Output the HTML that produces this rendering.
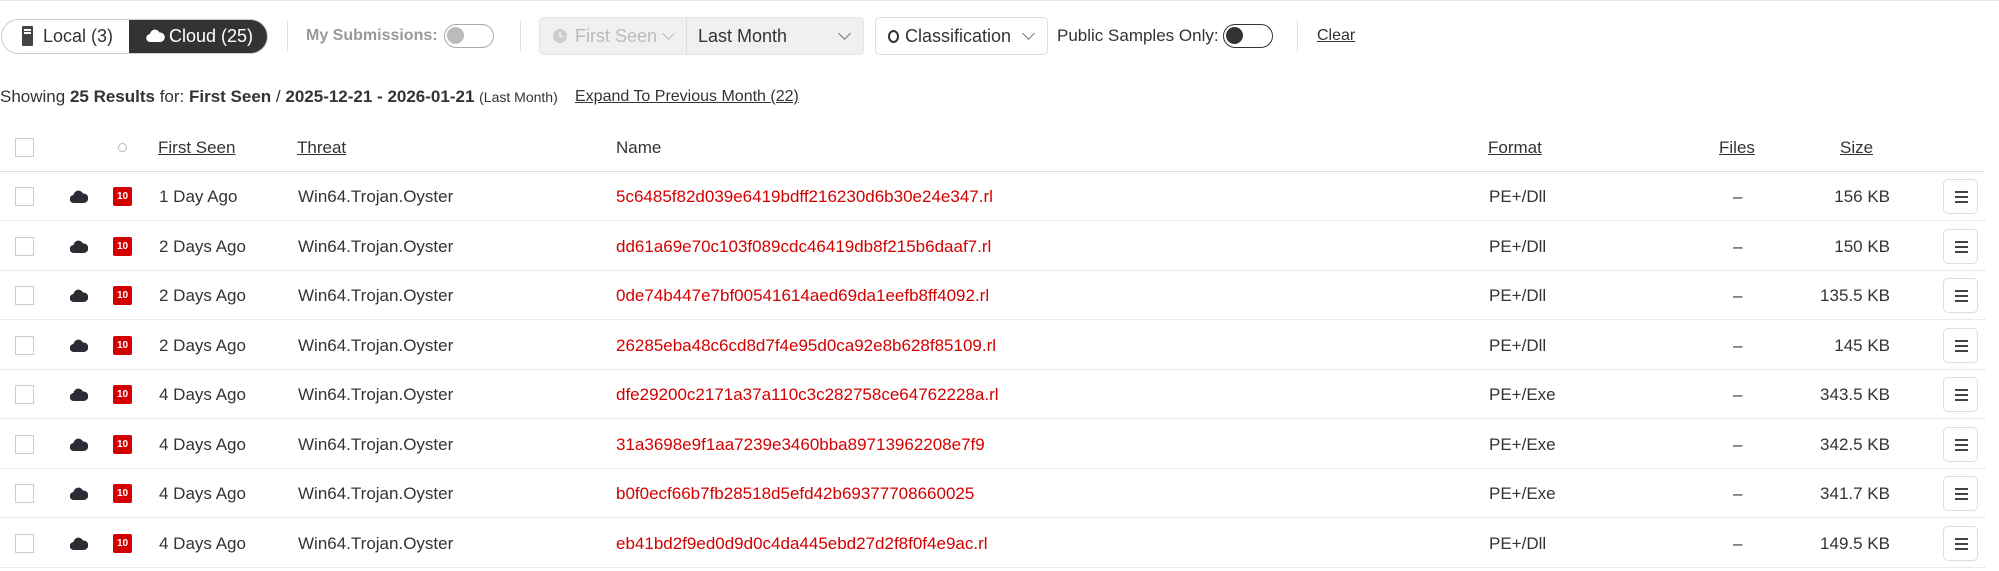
<!DOCTYPE html>
<html><head><meta charset="utf-8"><style>
*{box-sizing:border-box;margin:0;padding:0}
body{width:1999px;height:571px;background:#fff;position:relative;overflow:hidden;font-family:"Liberation Sans Narrow","Liberation Sans",Arial,sans-serif;color:#333;font-size:17px}
.a{position:absolute;white-space:nowrap}
.cb{position:absolute;width:19px;height:19px;border:1.5px solid #ccc;background:#fff}
.row{position:absolute;left:0;width:1985px;height:49px;border-bottom:1px dotted #d6d6d6}
.row .a{top:0;line-height:49px}
.badge{position:absolute;left:113px;top:15px;width:19px;height:19px;background:#d40000;border-radius:2px;color:#fff;font-size:10px;font-weight:bold;line-height:19px;text-align:center;font-family:"Liberation Sans",sans-serif}
.menu{position:absolute;left:1943px;top:7px;width:35px;height:35px;border:1px solid #ddd;border-radius:5px}
.menu i{position:absolute;left:11px;width:13px;height:2px;background:#444}
.u{text-decoration:underline}
.sep{position:absolute;width:1px;height:30px;background:#ddd;top:21px}
.tog{position:absolute;width:50px;height:24px;border:1.5px solid #888;border-radius:12px}
.tog i{position:absolute;left:2px;top:2px;width:17px;height:17px;border-radius:50%}
.dd{position:absolute;border:1px solid #ddd;border-radius:5px;height:38px;top:17px}
.chev{position:absolute;width:9px;height:9px;border-right:1.3px solid #777;border-bottom:1.3px solid #777;transform:rotate(45deg)}
.t{line-height:22px;top:25px;font-size:18px}
</style></head><body>
<div class="a" style="left:0;top:0;width:1999px;height:1px;background:#e6e6e6"></div>
<div style="position:absolute;left:1px;top:19px;width:267px;height:35px;border:1px solid #ccc;border-radius:18px;overflow:hidden">
 <div style="position:absolute;left:127px;top:0;width:140px;height:35px;background:#333"></div>
</div>
<div class="a" style="left:22px;top:26px;width:11px;height:20px;background:#444;border-radius:1px"></div>
<div class="a" style="left:24px;top:29px;width:7px;height:1.5px;background:#fff"></div>
<div class="a" style="left:24px;top:32px;width:7px;height:1.5px;background:#fff"></div>
<div class="a t" style="left:43px">Local (3)</div>
<svg class="a" style="left:146px;top:29px" width="19" height="13" viewBox="0 0 18 13"><path d="M4 13a4 4 0 0 1-.5-8A5 5 0 0 1 13 3.5 4.7 4.7 0 0 1 14 13z" fill="#fff"/></svg>
<div class="a t" style="left:169px;color:#fff">Cloud (25)</div>
<div class="sep" style="left:287px"></div>
<div class="a t" style="left:306px;color:#999;font-weight:bold;font-size:16px">My Submissions:</div>
<div class="tog" style="left:444px;top:24px;border-color:#aaa"><i style="background:#bbb"></i></div>
<div class="sep" style="left:520px"></div>
<div class="dd" style="left:539px;width:325px;background:#f0f0f0;border-color:#e4e4e4"></div>
<div class="a" style="left:686px;top:17px;width:1px;height:38px;background:#ddd"></div>
<svg class="a" style="left:553px;top:29px" width="14" height="14"><circle cx="7" cy="7" r="7" fill="#ccc"/><path d="M7 3v4.5h3" stroke="#f0f0f0" stroke-width="1.5" fill="none"/></svg>
<div class="a t" style="left:575px;color:#bbb">First Seen</div>
<div class="chev" style="left:664px;top:29px;border-color:#bbb"></div>
<div class="a t" style="left:698px">Last Month</div>
<div class="chev" style="left:840px;top:29px"></div>
<div class="dd" style="left:875px;width:173px;background:#fff"></div>
<div class="a" style="left:888px;top:30px;width:11px;height:13px;border:2px solid #333;border-radius:50%"></div>
<div class="a t" style="left:905px">Classification</div>
<div class="chev" style="left:1024px;top:29px"></div>
<div class="a t" style="left:1057px;font-size:17px">Public Samples Only:</div>
<div class="tog" style="left:1223px;top:24px;border-color:#333"><i style="background:#333"></i></div>
<div class="sep" style="left:1297px"></div>
<div class="a t" style="left:1317px;font-size:16px;text-decoration:underline">Clear</div>
<div class="a" style="left:0;top:86px;line-height:22px;font-size:17px">Showing <b>25 Results</b> for: <b>First Seen</b> / <b>2025-12-21 - 2026-01-21</b> <span style="font-size:14px">(Last Month)</span></div>
<div class="a u" style="left:575px;top:86px;line-height:22px;font-size:16px">Expand To Previous Month (22)</div>
<div class="a" style="left:0;top:171px;width:1985px;height:1px;background:#ddd"></div>
<div class="cb" style="left:15px;top:138px"></div>
<div class="a" style="left:118px;top:143px;width:9px;height:9px;border:1px solid #bbb;border-radius:50%"></div>
<div class="a u" style="left:158px;top:137px;line-height:22px">First Seen</div>
<div class="a u" style="left:297px;top:137px;line-height:22px">Threat</div>
<div class="a" style="left:616px;top:137px;line-height:22px">Name</div>
<div class="a u" style="left:1488px;top:137px;line-height:22px">Format</div>
<div class="a u" style="left:1719px;top:137px;line-height:22px">Files</div>
<div class="a u" style="left:1840px;top:137px;line-height:22px">Size</div>
<div id="rows"></div>
<script>
var d=[["1 Day Ago","5c6485f82d039e6419bdff216230d6b30e24e347.rl","PE+/Dll","156 KB"],
["2 Days Ago","dd61a69e70c103f089cdc46419db8f215b6daaf7.rl","PE+/Dll","150 KB"],
["2 Days Ago","0de74b447e7bf00541614aed69da1eefb8ff4092.rl","PE+/Dll","135.5 KB"],
["2 Days Ago","26285eba48c6cd8d7f4e95d0ca92e8b628f85109.rl","PE+/Dll","145 KB"],
["4 Days Ago","dfe29200c2171a37a110c3c282758ce64762228a.rl","PE+/Exe","343.5 KB"],
["4 Days Ago","31a3698e9f1aa7239e3460bba89713962208e7f9","PE+/Exe","342.5 KB"],
["4 Days Ago","b0f0ecf66b7fb28518d5efd42b69377708660025","PE+/Exe","341.7 KB"],
["4 Days Ago","eb41bd2f9ed0d9d0c4da445ebd27d2f8f0f4e9ac.rl","PE+/Dll","149.5 KB"]];
var h="";
d.forEach(function(r,i){
h+='<div class="row" style="top:'+(172+i*49.5)+'px">'+
'<div class="cb" style="left:15px;top:15px"></div>'+
'<svg class="a" style="left:70px;top:18px" width="18" height="13" viewBox="0 0 18 13"><path d="M4 13a4 4 0 0 1-.5-8A5 5 0 0 1 13 3.5 4.7 4.7 0 0 1 14 13z" fill="#2a2d33"/></svg>'+
'<div class="badge">10</div>'+
'<div class="a" style="left:159px">'+r[0]+'</div>'+
'<div class="a" style="left:298px">Win64.Trojan.Oyster</div>'+
'<div class="a" style="left:616px;color:#d40000">'+r[1]+'</div>'+
'<div class="a" style="left:1489px">'+r[2]+'</div>'+
'<div class="a" style="left:1733px">–</div>'+
'<div class="a" style="left:1760px;width:130px;text-align:right">'+r[3]+'</div>'+
'<div class="menu"><i style="top:11px"></i><i style="top:16px"></i><i style="top:21px"></i></div></div>';});
document.getElementById("rows").innerHTML=h;
</script>
</body></html>
